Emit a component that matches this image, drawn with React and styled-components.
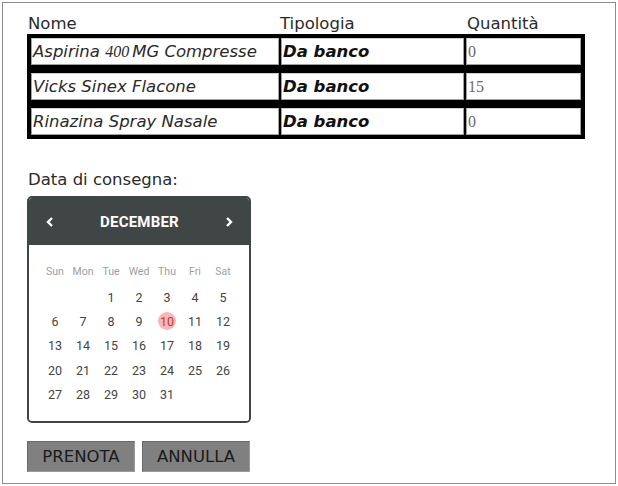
import React from 'react';
import styled, { createGlobalStyle } from 'styled-components';

const GlobalStyle = createGlobalStyle`
  html, body {
    margin: 0;
    padding: 0;
    background: #fff;
  }
  body {
    font-family: "DejaVu Sans", Verdana, sans-serif;
  }
`;

const Frame = styled.div`
  box-sizing: border-box;
  margin: 2px;
  width: 614px;
  height: 482px;
  border: 1px solid #8c8c8c;
  padding: 11px 0 0 24px;
  color: #2a2a2a;
`;

const HeadRow = styled.div`
  display: grid;
  grid-template-columns: 252px 187px 115px;
  height: 20px;
  font-size: 16.5px;
  line-height: 20px;
  padding-left: 1px;
`;

const Rows = styled.div`
  width: 558px;
`;

const Row = styled.div`
  display: grid;
  grid-template-columns: 248px 183px 115px;
  gap: 2px;
  background: #000;
  border: 4px solid #000;
  height: 27px;
`;

const Cell = styled.div`
  box-sizing: border-box;
  background: #fff;
  border: 1px solid #a0a0a0;
  border-top-color: #d0d0d0;
  display: flex;
  align-items: center;
  padding-left: 1px;
  font-size: 16.5px;
  font-style: italic;
  font-weight: ${(p) => (p.bold ? 'bold' : 'normal')};
  color: ${(p) => (p.bold ? '#111' : '#2a2a2a')};
  white-space: nowrap;
  overflow: hidden;
`;

const Num = styled.span`
  font-family: "Liberation Serif", "Times New Roman", serif;
  font-style: ${(p) => (p.upright ? 'normal' : 'italic')};
  font-size: 16px;
  color: ${(p) => (p.upright ? '#6a6a6a' : '#2a2a2a')};
  margin-right: ${(p) => (p.upright ? '0' : '3px')};
`;

const Label = styled.div`
  margin-top: 31px;
  font-size: 16.5px;
  line-height: 20px;
  padding-left: 1px;
  color: #2a2a2a;
`;

const Calendar = styled.div`
  box-sizing: border-box;
  width: 224px;
  margin-top: 6px;
  border: 2px solid #3f4645;
  border-radius: 5px;
  overflow: hidden;
  font-family: Roboto, "Liberation Sans", sans-serif;
`;

const CalHeader = styled.div`
  height: 47px;
  background: #3f4645;
  display: flex;
  align-items: center;
  justify-content: space-between;
  padding: 0 15px 0 16px;
  color: #fff;
`;

const Month = styled.div`
  font-size: 15px;
  font-weight: bold;
  letter-spacing: 0.2px;
`;

const Arrow = styled.svg`
  width: 10px;
  height: 12px;
  display: block;
`;

const CalBody = styled.div`
  background: #fff;
  padding: 15px 12px 15px 12px;
  display: grid;
  grid-template-columns: repeat(7, 28px);
`;

const WeekDay = styled.div`
  height: 24px;
  line-height: 24px;
  text-align: center;
  font-size: 10.5px;
  color: #9aa0a0;
  margin-bottom: 1px;
`;

const Day = styled.div`
  height: 24.3px;
  display: flex;
  align-items: center;
  justify-content: center;
`;

const DayNum = styled.span`
  width: 18px;
  height: 18px;
  border-radius: 50%;
  display: flex;
  align-items: center;
  justify-content: center;
  font-size: 12.5px;
  color: ${(p) => (p.today ? '#d0342c' : '#444')};
  background: ${(p) => (p.today ? '#f6b7b7' : 'transparent')};
`;

const Buttons = styled.div`
  display: flex;
  gap: 7px;
  margin-top: 18px;
`;

const Button = styled.button`
  box-sizing: border-box;
  width: 108px;
  height: 31px;
  background: #808080;
  border: 1px solid #6a6a6a;
  border-right-color: #9a9a9a;
  border-bottom-color: #9a9a9a;
  font-family: "DejaVu Sans", Verdana, sans-serif;
  font-size: 16.5px;
  color: #1a1a1a;
  padding: 0;
`;

const medicines = [
  { name: 'Aspirina', extra: '400', rest: 'MG Compresse', type: 'Da banco', qty: '0' },
  { name: 'Vicks Sinex Flacone', type: 'Da banco', qty: '15' },
  { name: 'Rinazina Spray Nasale', type: 'Da banco', qty: '0' },
];

const weekDays = ['Sun', 'Mon', 'Tue', 'Wed', 'Thu', 'Fri', 'Sat'];

const days = [null, null, ...Array.from({ length: 31 }, (_, i) => i + 1)];

const Chevron = ({ dir }) => (
  <Arrow viewBox="0 0 10 12">
    <path
      d={dir === 'left' ? 'M7 2 L3 6 L7 10' : 'M3 2 L7 6 L3 10'}
      fill="none"
      stroke="#fff"
      strokeWidth="2.4"
    />
  </Arrow>
);

const App = () => (
  <>
    <GlobalStyle />
    <Frame>
      <HeadRow>
        <span>Nome</span>
        <span>Tipologia</span>
        <span>Quantità</span>
      </HeadRow>
      <Rows>
        {medicines.map((m) => (
          <Row key={m.name}>
            <Cell>
              {m.extra ? (
                <>
                  {m.name}&nbsp;<Num>{m.extra}</Num>
                  {m.rest}
                </>
              ) : (
                m.name
              )}
            </Cell>
            <Cell bold>{m.type}</Cell>
            <Cell>
              <Num upright>{m.qty}</Num>
            </Cell>
          </Row>
        ))}
      </Rows>
      <Label>Data di consegna:</Label>
      <Calendar>
        <CalHeader>
          <Chevron dir="left" />
          <Month>DECEMBER</Month>
          <Chevron dir="right" />
        </CalHeader>
        <CalBody>
          {weekDays.map((d) => (
            <WeekDay key={d}>{d}</WeekDay>
          ))}
          {days.map((d, i) => (
            <Day key={i}>{d && <DayNum today={d === 10}>{d}</DayNum>}</Day>
          ))}
        </CalBody>
      </Calendar>
      <Buttons>
        <Button>PRENOTA</Button>
        <Button>ANNULLA</Button>
      </Buttons>
    </Frame>
  </>
);

export default App;
